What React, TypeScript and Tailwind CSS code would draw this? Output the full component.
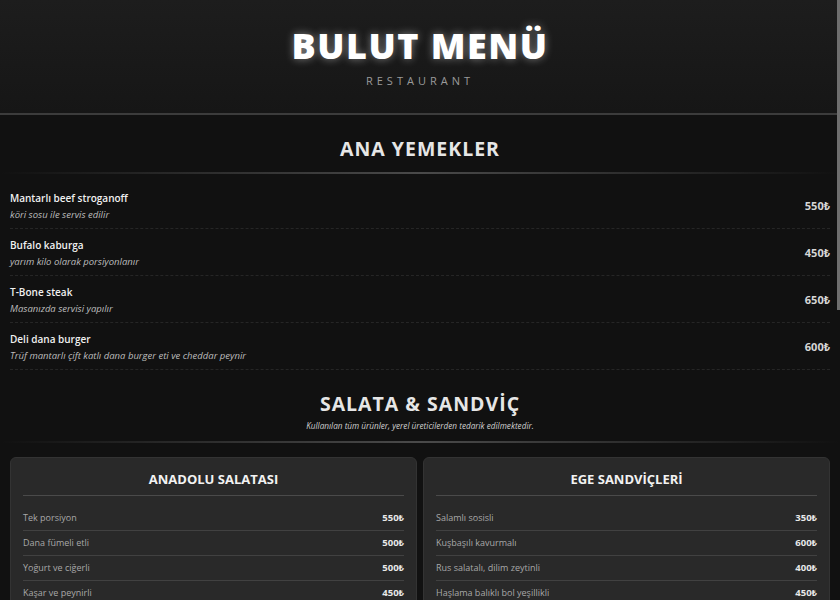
const mains = [
  { name: "Mantarlı beef stroganoff", desc: "köri sosu ile servis edilir", price: "550₺" },
  { name: "Bufalo kaburga", desc: "yarım kilo olarak porsiyonlanır", price: "450₺" },
  { name: "T-Bone steak", desc: "Masanızda servisi yapılır", price: "650₺" },
  { name: "Deli dana burger", desc: "Trüf mantarlı çift katlı dana burger eti ve cheddar peynir", price: "600₺" },
];

const cards = [
  {
    title: "ANADOLU SALATASI",
    rows: [
      ["Tek porsiyon", "550₺"],
      ["Dana fümeli etli", "500₺"],
      ["Yoğurt ve ciğerli", "500₺"],
      ["Kaşar ve peynirli", "450₺"],
      ["Ton balıklı", "500₺"],
      ["Tavuklu sezar", "450₺"],
    ],
  },
  {
    title: "EGE SANDVİÇLERİ",
    rows: [
      ["Salamlı sosisli", "350₺"],
      ["Kuşbaşılı kavurmalı", "600₺"],
      ["Rus salatalı, dilim zeytinli", "400₺"],
      ["Haşlama balıklı bol yeşillikli", "450₺"],
      ["Hindi füme ve cheddar", "400₺"],
      ["Köz patlıcanlı köfte", "500₺"],
    ],
  },
];

const desserts = [
  { name: "Fırın sütlaç", desc: "tarçın ve fındık ile", price: "180₺" },
  { name: "Künefe", desc: "antep fıstıklı, sıcak servis", price: "250₺" },
  { name: "Trileçe", desc: "karamel soslu", price: "200₺" },
  { name: "Çikolatalı sufle", desc: "vanilyalı dondurma ile", price: "220₺" },
];

const SectionTitle = ({ title, sub }: { title: string; sub?: string }) => (
  <div className="flex flex-col items-center pt-[20px]">
    <h2 className="text-[19.5px] font-bold tracking-[1px] text-[#e6e6e6] leading-[28px]">{title}</h2>
    {sub && <p className="mt-[2px] text-[8.2px] italic text-[#d0d0d0] leading-[12px]">{sub}</p>}
    <div className="mt-[9px] h-[2px] w-full bg-linear-to-r from-transparent via-[#4a4a4a] to-transparent" />
  </div>
);

const ItemList = ({ items }: { items: typeof mains }) => (
  <div className="px-[10px] pt-[8px]">
    {items.map((it) => (
      <div key={it.name} className="flex items-center justify-between border-b border-dashed border-[#262626] pt-[9px] pb-[7px]">
        <div className="flex flex-col">
          <span className="text-[10px] font-semibold text-[#f0f0f0] leading-[14px]">{it.name}</span>
          <span className="mt-[3px] text-[9.5px] italic text-[#bdbdbd] leading-[13px]">{it.desc}</span>
        </div>
        <span className="text-[11px] font-bold text-[#d6d6d6]">{it.price}</span>
      </div>
    ))}
  </div>
);

export default function App() {
  return (
    <div className="relative h-[600px] overflow-hidden bg-[#111111]" style={{ fontFamily: '"Open Sans", "Noto Sans", sans-serif' }}>
      <header className="flex h-[115px] flex-col items-center border-b-2 border-[#3c3c3c] bg-linear-to-b from-[#1d1d1d] to-[#161616] pt-[24px]">
        <h1 className="text-[36px] font-extrabold tracking-[1.5px] text-white leading-[44px] [text-shadow:0_0_8px_rgba(255,255,255,0.45)]">
          BULUT MENÜ
        </h1>
        <p className="mt-[5px] text-[11px] tracking-[4px] text-[#9a9a9a] leading-[16px]">RESTAURANT</p>
      </header>

      <SectionTitle title="ANA YEMEKLER" />
      <ItemList items={mains} />

      <SectionTitle title="SALATA & SANDVİÇ" sub="Kullanılan tüm ürünler, yerel üreticilerden tedarik edilmektedir." />
      <div className="grid grid-cols-2 gap-[6px] px-[10px] pt-[14px]">
        {cards.map((c) => (
          <div key={c.title} className="rounded-[6px] border border-[#333] bg-[#292929] px-[12px] pt-[11px] pb-[10px]">
            <h3 className="text-center text-[13px] font-bold text-[#f2f2f2] leading-[20px]">{c.title}</h3>
            <div className="mt-[6px] h-px bg-[#4a4a4a]" />
            <div className="pt-[10px]">
              {c.rows.map(([n, p], i) => (
                <div
                  key={n}
                  className={`flex items-center justify-between py-[6px] ${i < c.rows.length - 1 ? "border-b border-[#414141]" : ""}`}
                >
                  <span className="text-[9px] text-[#a8a8a8] leading-[12px]">{n}</span>
                  <span className="text-[9.5px] font-bold text-[#e8e8e8] leading-[12px]">{p}</span>
                </div>
              ))}
            </div>
          </div>
        ))}
      </div>

      <SectionTitle title="TATLILAR" />
      <ItemList items={desserts} />

      <footer className="mt-[30px] border-t-2 border-[#3c3c3c] bg-[#161616] py-[24px] text-center">
        <p className="text-[11px] tracking-[3px] text-[#9a9a9a]">BULUT MENÜ · RESTAURANT</p>
        <p className="mt-[6px] text-[9px] italic text-[#777]">Afiyet olsun</p>
      </footer>

      {/* scrollbar thumb */}
      <div className="absolute top-0 right-0 h-[310px] w-[3px] bg-[#6e6e6e]" />
    </div>
  );
}
